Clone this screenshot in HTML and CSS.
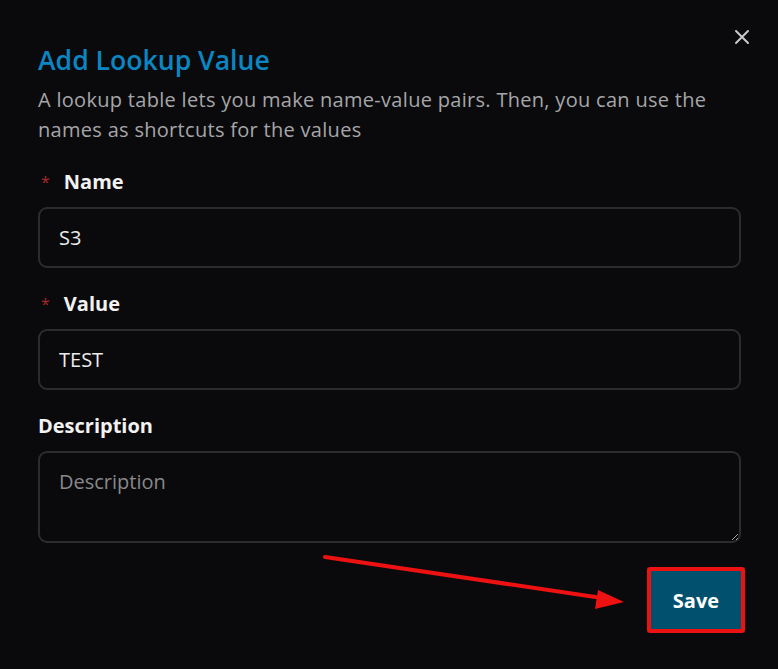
FILE: index.html
```html
<!DOCTYPE html>
<html lang="en">
<head>
    <meta charset="UTF-8">
    <meta name="viewport" content="width=device-width, initial-scale=1.0">
    <title>Add Lookup Value</title>
    <link rel="stylesheet" href="styles.css">
</head>
<body>
    <div class="modal">
        <button class="close-btn" aria-label="Close">
            <svg width="16" height="16" viewBox="0 0 16 16"><path d="M2 2 L14 14 M14 2 L2 14" stroke="currentColor" stroke-width="2" stroke-linecap="round"/></svg>
        </button>

        <h1>Add Lookup Value</h1>
        <p class="intro">A lookup table lets you make name-value pairs. Then, you can use the names as shortcuts for the values</p>

        <form class="lookup-form">
            <div class="field">
                <label for="name"><span class="req">*</span>Name</label>
                <input type="text" id="name" value="S3">
            </div>
            <div class="field">
                <label for="value"><span class="req">*</span>Value</label>
                <input type="text" id="value" value="TEST">
            </div>
            <div class="field">
                <label for="desc">Description</label>
                <textarea id="desc" placeholder="Description"></textarea>
            </div>
            <div class="actions">
                <button type="submit" class="save-btn">Save</button>
            </div>
        </form>

        <!-- pointer drawn over the form -->
        <svg class="pointer" width="778" height="669" viewBox="0 0 778 669">
            <line x1="325" y1="557" x2="602" y2="598" stroke="#ee1111" stroke-width="4" stroke-linecap="round"/>
            <polygon points="624,602 598,590 595,609" fill="#ee1111"/>
        </svg>
    </div>
</body>
</html>
```

FILE: styles.css
```css
* { margin: 0; padding: 0; box-sizing: border-box; }
body { background-color: #0a0a0c; font-family: "Open Sans", "Noto Sans", sans-serif; color: #e8e8e8; }
.modal { position: relative; width: 778px; height: 669px; padding: 40px 37px 0 38px; }
.close-btn { position: absolute; top: 29px; right: 28px; background: none; border: none; color: #c9c9c9; cursor: pointer; display: flex; }
h1 { font-size: 26.6px; line-height: 40px; font-weight: 600; color: #0a86c2; }
.intro { font-size: 20px; line-height: 30px; letter-spacing: 0.3px; color: #a6a6a9; margin-top: 5px; }
.lookup-form { display: flex; flex-direction: column; margin-top: 24px; }
.field { display: flex; flex-direction: column; margin-bottom: 23px; }
label { font-size: 20px; line-height: 26px; font-weight: 700; color: #f2f2f2; margin-bottom: 12px; display: flex; align-items: center; }
.req { color: #a8272b; font-size: 16px; font-weight: 400; margin: 0 14px 0 3px; }
input, textarea { width: 100%; background-color: #0a0a0c; border: 2px solid #2c2c2f; border-radius: 9px; font-family: inherit; font-size: 20px; color: #ececec; padding: 0 19px; outline: none; }
input { height: 61px; }
textarea { height: 92px; padding-top: 15px; resize: vertical; }
textarea::placeholder { color: #88888b; }
.actions { display: flex; justify-content: flex-end; margin-top: 1px; margin-right: -4px; }
.save-btn { width: 98px; height: 66px; background-color: #00506e; border: 4px solid #ee1111; border-radius: 3px; color: #fff; font-family: inherit; font-size: 20px; font-weight: 700; cursor: pointer; }
.pointer { position: absolute; top: 0; left: 0; pointer-events: none; }
```
